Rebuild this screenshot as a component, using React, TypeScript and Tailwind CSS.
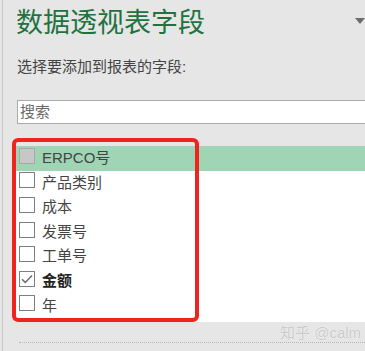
const fields = [
  { name: "ERPCO号", state: "disabled", active: true },
  { name: "产品类别", state: "off" },
  { name: "成本", state: "off" },
  { name: "发票号", state: "off" },
  { name: "工单号", state: "off" },
  { name: "金额", state: "on" },
  { name: "年", state: "off" },
];

const Box = ({ state }: { state: string }) => {
  if (state === "disabled") {
    return <span className="mb-[5px] h-[16px] w-[16px] shrink-0 border border-[#a9a9a9] bg-[#c7c7c7]" />;
  }
  return (
    <span className="mb-[5px] flex h-[16px] w-[16px] shrink-0 items-center justify-center border border-[#7f7f7f] bg-white">
      {state === "on" && (
        <svg width="12" height="10" viewBox="0 0 12 10" fill="none">
          <path d="M1 5.2 L4.3 8.4 L11 1.4" stroke="#6b6b6b" strokeWidth="1.5" />
        </svg>
      )}
    </span>
  );
};

export default function App() {
  return (
    <div className="relative h-[351px] w-[365px] overflow-hidden bg-[#e6e6e6] font-[family-name:'Liberation_Sans','Noto_Sans_CJK_SC',sans-serif]">
      <div className="ml-[2px] h-full border-l border-[#c6c6c6]">
        {/* header */}
        <div className="flex items-start justify-between">
          <h1 className="ml-[13px] mt-[10px] text-[27px] leading-[27px] text-[#227240]">数据透视表字段</h1>
          <span className="mt-[18px] h-0 w-0 border-l-[5.5px] border-r-[5.5px] border-t-[6px] border-l-transparent border-r-transparent border-t-[#6c6c6c]" />
        </div>
        <p className="ml-[14px] mt-[22px] text-[15px] leading-[15px] text-[#444]">选择要添加到报表的字段:</p>

        {/* search */}
        <div className="ml-[14px] mt-[26px] flex h-[24px] w-[360px] items-center border border-[#ababab] bg-white pl-[2px] text-[15px] text-[#6a6a6a]">
          搜索
        </div>

        {/* field list */}
        <div className="relative ml-[11px] mt-[22px]">
          <div className="h-[176px] bg-white">
            {fields.map((f) => (
              <div
                key={f.name}
                className={`flex h-[24.6px] items-center gap-[7px] pl-[5px] text-[15px] ${f.active ? "bg-[#9fd5b5]" : ""} ${f.state === "on" ? "font-bold text-[#222]" : "text-[#444]"}`}
              >
                <Box state={f.state} />
                <span>{f.name}</span>
              </div>
            ))}
          </div>
          <div className="absolute left-[-2px] top-[-8px] h-[184px] w-[187px] rounded-[6px] border-[4px] border-[#f0241f]" />
        </div>

        <div className="ml-[16px] mt-[20px] border-t border-dotted border-[#b4b4b4]" />
      </div>

      <span className="absolute left-[280px] top-[324px] text-[15px] leading-[18px] text-[#cacaca] [text-shadow:0_0_1px_#fff]">
        知乎 @calm
      </span>
    </div>
  );
}
